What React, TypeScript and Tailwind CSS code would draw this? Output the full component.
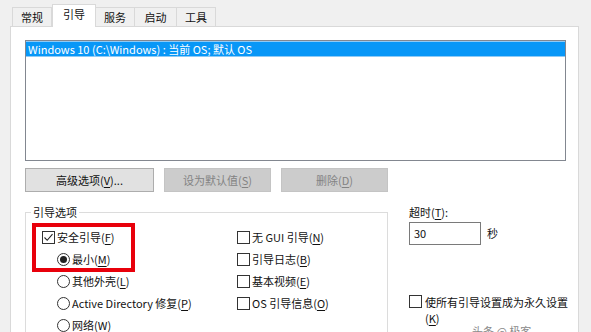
import React from 'react'

const font = { fontFamily: '"Microsoft YaHei UI", "Noto Sans CJK SC", "Noto Sans", sans-serif' }

const tabs = [
  { label: '常规', w: 'w-[40px]' },
  { label: '引导', w: 'w-[44px]', active: true },
  { label: '服务', w: 'w-[40px]' },
  { label: '启动', w: 'w-[43px]' },
  { label: '工具', w: 'w-[40px]' },
]

function Acc({ text, k, tail = '' }: { text: string; k: string; tail?: string }) {
  return (
    <span>
      {text}(<span className="underline underline-offset-2">{k}</span>){tail}
    </span>
  )
}

function Box({ checked }: { checked?: boolean }) {
  return (
    <span className="flex h-[13px] w-[13px] shrink-0 items-center justify-center border border-[#333] bg-white">
      {checked && (
        <svg width="11" height="11" viewBox="0 0 11 11">
          <path d="M1.5 5.5 L4.2 8.3 L9.5 2.2" fill="none" stroke="#222" strokeWidth="1.1" />
        </svg>
      )}
    </span>
  )
}

function Radio({ on }: { on?: boolean }) {
  return (
    <span className="flex h-[13px] w-[13px] shrink-0 items-center justify-center rounded-full border border-[#333] bg-white">
      {on && <span className="h-[7px] w-[7px] rounded-full bg-[#222]" />}
    </span>
  )
}

function Row({ children, indent }: { children: React.ReactNode; indent?: boolean }) {
  return (
    <div className={`flex h-[22px] items-center gap-[2px] ${indent ? 'pl-[15px]' : ''}`}>{children}</div>
  )
}

export default function App() {
  return (
    <div className="relative h-[332px] w-[591px] overflow-hidden bg-[#f0f0f0] text-[11px] text-[#111]" style={font}>
      <div className="flex h-[26px] items-end pl-[13px]">
        {tabs.map((t) => (
          <div
            key={t.label}
            className={`flex items-center justify-center border border-b-0 border-[#d9d9d9] ${t.w} ${
              t.active ? 'relative z-10 -mb-px h-[23px] bg-white pb-[3px]' : '-ml-px h-[19px] bg-[#f0f0f0]'
            }`}
          >
            {t.label}
          </div>
        ))}
      </div>

      <div className="ml-[10px] h-[310px] w-[569px] border border-[#d9d9d9] bg-white pl-[14px] pt-[13px]">
        <div className="h-[121px] w-[541px] border border-[#828790]">
          <div className="h-[16px] border-y border-[#8fcaf5] bg-[#0897f7] pl-[2px] leading-[14px] text-white">
            Windows 10 (C:\Windows) : 当前 OS; 默认 OS
          </div>
        </div>

        <div className="mt-[7px] flex gap-[10px]">
          <div className="flex h-[24px] w-[129px] items-center justify-center border border-[#adadad] bg-[#e1e1e1]">
            <Acc text="高级选项" k="V" tail="..." />
          </div>
          <div className="flex h-[24px] w-[107px] items-center justify-center border border-[#c4c4c4] bg-[#cccccc] text-[#838383]">
            <Acc text="设为默认值" k="S" />
          </div>
          <div className="flex h-[24px] w-[107px] items-center justify-center border border-[#c4c4c4] bg-[#cccccc] text-[#838383]">
            <Acc text="删除" k="D" />
          </div>
        </div>

        <div className="mt-[12px] flex">
          <fieldset className="h-[140px] w-[363px] border border-[#dcdcdc]">
            <legend className="ml-[5px] px-[2px] leading-[16px]">引导选项</legend>
            <div className="grid grid-cols-[195px_1fr] pl-[16px] pt-[6px]">
              <div>
                <Row>
                  <Box checked />
                  <Acc text="安全引导" k="F" />
                </Row>
                <Row indent>
                  <Radio on />
                  <Acc text="最小" k="M" />
                </Row>
                <Row indent>
                  <Radio />
                  <Acc text="其他外壳" k="L" />
                </Row>
                <Row indent>
                  <Radio />
                  <Acc text="Active Directory 修复" k="P" />
                </Row>
                <Row indent>
                  <Radio />
                  <Acc text="网络" k="W" />
                </Row>
              </div>
              <div>
                <Row>
                  <Box />
                  <Acc text="无 GUI 引导" k="N" />
                </Row>
                <Row>
                  <Box />
                  <Acc text="引导日志" k="B" />
                </Row>
                <Row>
                  <Box />
                  <Acc text="基本视频" k="E" />
                </Row>
                <Row>
                  <Box />
                  <Acc text="OS 引导信息" k="O" />
                </Row>
              </div>
            </div>
          </fieldset>

          <div className="ml-[21px] flex flex-col">
            <div className="leading-[16px]">
              <Acc text="超时" k="T" tail=":" />
            </div>
            <div className="mt-[2px] flex items-center gap-[6px]">
              <div className="flex h-[23px] w-[72px] items-center border border-[#7a7a7a] pl-[4px]">30</div>
              <span>秒</span>
            </div>
            <div className="mt-[49px] flex items-start gap-[3px]">
              <span className="mt-[1px]">
                <Box />
              </span>
              <div className="w-[150px] leading-[16px]">
                <div>使所有引导设置成为永久设置</div>
                <div>
                  (<span className="underline underline-offset-2">K</span>)
                </div>
              </div>
            </div>
          </div>
        </div>
      </div>

      <div className="absolute left-[32px] top-[223px] h-[49px] w-[103px] border-4 border-[#e8000b]" />
      <div className="absolute left-[472px] top-[325px] text-[11px] leading-[12px] text-[#8a8a8a]">头条 @ 极客</div>
    </div>
  )
}
